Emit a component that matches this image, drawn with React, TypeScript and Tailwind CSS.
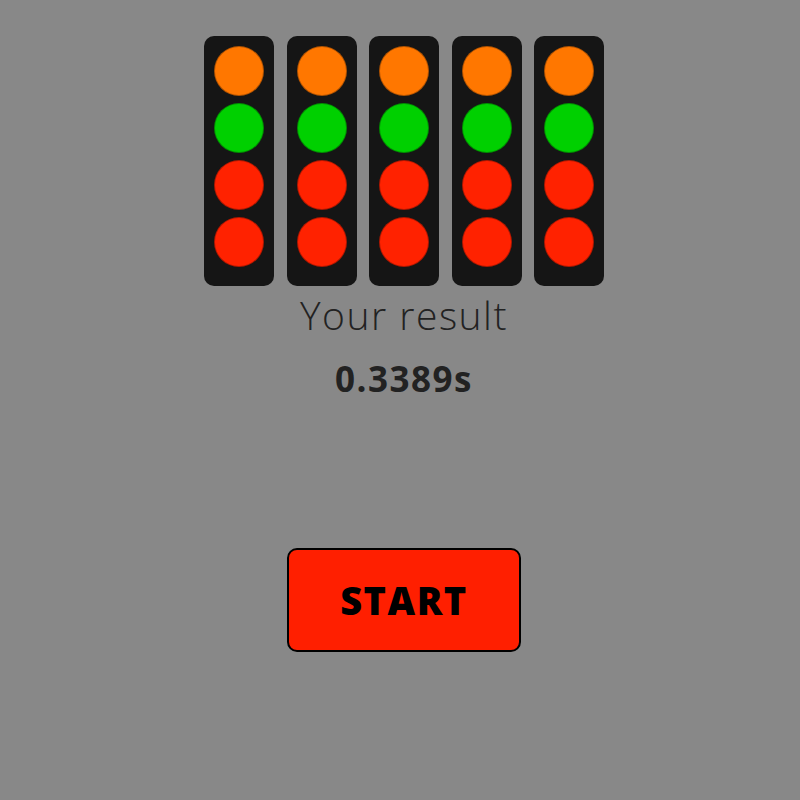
import React from 'react';

const COLORS = ['bg-[#ff7700]', 'bg-[#00d000]', 'bg-[#ff2200]', 'bg-[#ff2200]'];

function Light() {
  return (
    <div className="flex w-[70px] flex-col items-center gap-[7px] rounded-[10px] bg-[#151515] pt-[10px] pb-[19px]">
      {COLORS.map((c, i) => (
        <div key={i} className={`h-[50px] w-[50px] rounded-full border border-black/30 ${c}`} />
      ))}
    </div>
  );
}

export default function App() {
  return (
    <div
      className="flex min-h-[800px] flex-col items-center bg-[#888888] pt-[36px] pl-[8px] text-[#222]"
      style={{ fontFamily: '"Open Sans", "Noto Sans", sans-serif' }}
    >
      <div className="flex gap-[12.5px]">
        {[0, 1, 2, 3, 4].map((i) => (
          <Light key={i} />
        ))}
      </div>
      <div className="mt-[5px] text-[39px] font-light leading-[48px] tracking-[1.5px]">Your result</div>
      <div className="mt-[19px] text-[35px] font-bold leading-[42px] tracking-[1.5px]">0.3389s</div>
      <button className="mt-[148px] box-border h-[104px] w-[234px] rounded-[10px] border-2 border-black bg-[#ff1f00] text-[38px] font-extrabold tracking-[1.5px] text-black">
        START
      </button>
    </div>
  );
}
